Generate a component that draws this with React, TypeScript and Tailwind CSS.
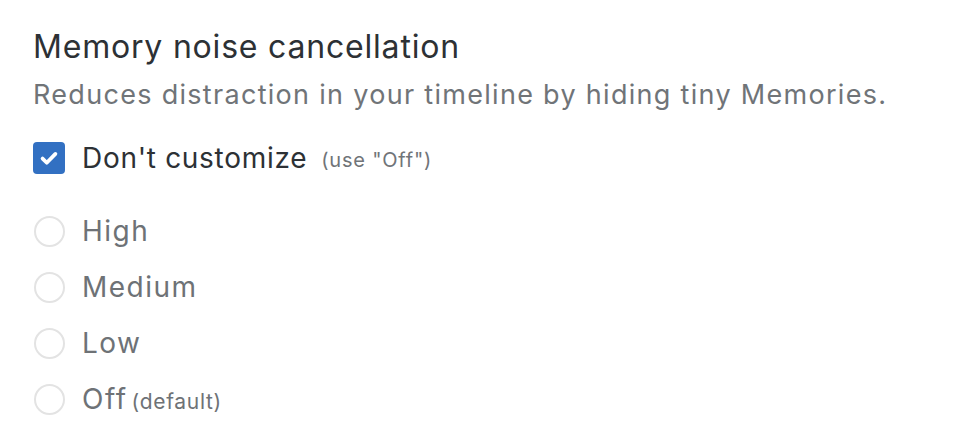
import React from 'react';

const options = [
  { label: 'High', note: '' },
  { label: 'Medium', note: '' },
  { label: 'Low', note: '' },
  { label: 'Off', note: '(default)' },
];

const App: React.FC = () => {
  return (
    <div className="w-[976px] h-[440px] bg-white pl-[33px] pt-[27px] font-['Inter','Noto_Sans',sans-serif]">
      <h2 className="text-[32px] leading-[40px] tracking-[0.8px] text-[#2d3135] whitespace-nowrap">
        Memory noise cancellation
      </h2>
      <p className="text-[27px] leading-[40px] tracking-[1.3px] text-[#707478] mt-[8px] whitespace-nowrap">
        Reduces distraction in your timeline by hiding tiny Memories.
      </p>

      <label className="flex items-center mt-[27px] h-[32px]">
        <span className="w-[32px] h-[32px] rounded-[4px] bg-[#3270c2] flex items-center justify-center flex-shrink-0">
          <svg viewBox="0 0 24 24" className="w-[28px] h-[28px]" fill="none" stroke="white" strokeWidth="3.2" strokeLinecap="round" strokeLinejoin="round">
            <path d="M6.5 12.5l3.6 3.6L17.5 8.5" />
          </svg>
        </span>
        <span className="ml-[17px] text-[28px] tracking-[0.7px] text-[#2d3135] whitespace-nowrap">Don't customize</span>
        <span className="ml-[14px] mt-[4px] text-[20px] tracking-[0.8px] text-[#707478] whitespace-nowrap">(use "Off")</span>
      </label>

      <div className="flex flex-col gap-[24px] mt-[41px]">
        {options.map((o) => (
          <label key={o.label} className="flex items-center h-[32px]">
            <span className="ml-[1px] w-[31px] h-[31px] rounded-full border-2 border-[#e3e3e3] flex-shrink-0" />
            <span className="ml-[17px] text-[28px] tracking-[1.5px] text-[#6e7276] whitespace-nowrap">{o.label}</span>
            {o.note && (
              <span className="ml-[4px] mt-[6px] text-[21px] tracking-[0.7px] text-[#6e7276] whitespace-nowrap">{o.note}</span>
            )}
          </label>
        ))}
      </div>
    </div>
  );
};

export default App;
